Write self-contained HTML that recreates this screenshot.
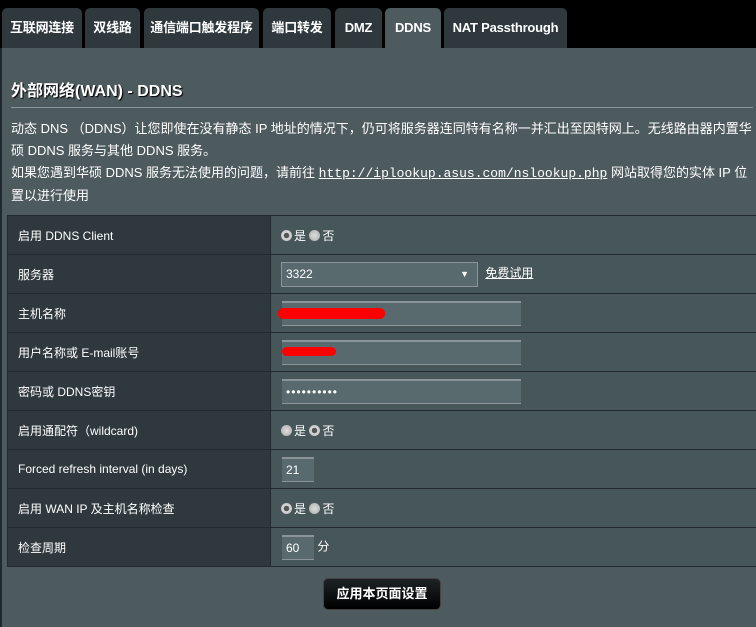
<!DOCTYPE html>
<html><head><meta charset="utf-8"><style>
*{margin:0;padding:0;box-sizing:border-box}
body{width:756px;height:627px;background:#000;font-family:"Liberation Sans","Noto Sans CJK SC",sans-serif;color:#fff;position:relative;overflow:hidden;font-size:13px}
.tab{position:absolute;top:8px;height:41px;background:#2e383d;border-radius:5px 5px 0 0;font-size:13px;line-height:40px;text-align:center;color:#fff;font-weight:bold;letter-spacing:-0.2px}
.tab.a{background:#4d5a5e}
.panel{position:absolute;left:2px;top:48px;width:754px;height:579px;background:#4d5a5e}
.strip{position:absolute;left:0;top:48px;width:2px;height:579px;background:#1e2a30}
h1{position:absolute;left:11px;top:77px;font-size:16px;font-weight:bold;text-shadow:1px 1px 1px #000}
.hr{position:absolute;left:11px;top:107px;width:742px;height:1px;background:#8a9599}
.txt{position:absolute;left:11px;top:118px;width:743px;font-size:13px;line-height:22px;color:#fff}
.txt a{color:#fff;font-family:"Liberation Mono",monospace;font-size:13px;text-decoration:underline}
table{position:absolute;left:7px;top:215px;border-collapse:collapse;width:752px}
td{border:1px solid #222a2e;height:39px;font-size:12px;padding-left:10px}
td.l{background:#2e383d;width:263px}
td.v{background:#475659}
.r{display:inline-block;width:11px;height:11px;border-radius:50%;background:radial-gradient(#ddd,#aaa);vertical-align:-1px;margin-right:2px}
.r.on{background:radial-gradient(#555 0 2.5px,#ddd 3px,#aaa)}
.in{display:inline-block;height:25px;background:#596a6f;border-top:2px solid #8b9599;border-bottom:1px solid #8b9599;vertical-align:middle;color:#fff;font-size:12px;line-height:22px;padding-left:4px}
.red{position:absolute;background:#f00;border-radius:5px}
.btn{position:absolute;left:323px;top:578px;width:118px;height:32px;background:linear-gradient(#1d2326,#000);border:1px solid #444;border-radius:5px;font-weight:bold;font-size:13px;text-align:center;line-height:30px}
</style></head><body>
<div class="tab" style="left:2px;width:80px">互联网连接</div>
<div class="tab" style="left:85px;width:55px">双线路</div>
<div class="tab" style="left:144px;width:115px">通信端口触发程序</div>
<div class="tab" style="left:263px;width:68px">端口转发</div>
<div class="tab" style="left:335px;width:47px">DMZ</div>
<div class="tab a" style="left:385px;width:56px">DDNS</div>
<div class="tab" style="left:444px;width:123px">NAT Passthrough</div>
<div class="panel"></div><div class="strip"></div>
<h1>外部网络(WAN) - DDNS</h1>
<div class="hr"></div>
<div class="txt">动态 DNS （DDNS）让您即使在没有静态 IP 地址的情况下，仍可将服务器连同特有名称一并汇出至因特网上。无线路由器内置华硕 DDNS 服务与其他 DDNS 服务。<br>如果您遇到华硕 DDNS 服务无法使用的问题，请前往 <a>http://iplookup.asus.com/nslookup.php</a> 网站取得您的实体 IP 位置以进行使用</div>
<table>
<tr><td class="l">启用 DDNS Client</td><td class="v"><span class="r on"></span>是 <span class="r"></span>否</td></tr>
<tr><td class="l">服务器</td><td class="v"><span class="in" style="width:197px;border:1px solid #8b9599;position:relative">3322<span style="position:absolute;right:8px;font-size:9px">▼</span></span> <span style="text-decoration:underline;margin-left:4px">免费试用</span></td></tr>
<tr><td class="l">主机名称</td><td class="v"><span class="in" style="width:239px;margin-left:1px"></span></td></tr>
<tr><td class="l">用户名称或 E-mail账号</td><td class="v"><span class="in" style="width:239px;margin-left:1px"></span></td></tr>
<tr><td class="l">密码或 DDNS密钥</td><td class="v"><span class="in" style="width:239px;margin-left:1px;letter-spacing:1px">••••••••••</span></td></tr>
<tr><td class="l">启用通配符（wildcard)</td><td class="v"><span class="r"></span>是 <span class="r on"></span>否</td></tr>
<tr><td class="l">Forced refresh interval (in days)</td><td class="v"><span class="in" style="width:32px;margin-left:1px">21</span></td></tr>
<tr><td class="l">启用 WAN IP 及主机名称检查</td><td class="v"><span class="r on"></span>是 <span class="r"></span>否</td></tr>
<tr><td class="l">检查周期</td><td class="v"><span class="in" style="width:32px;margin-left:1px">60</span> 分</td></tr>
</table>
<div class="red" style="left:278px;top:308px;width:107px;height:11px"></div>
<div class="red" style="left:282px;top:347px;width:54px;height:9px"></div>
<div class="btn">应用本页面设置</div>
</body></html>
